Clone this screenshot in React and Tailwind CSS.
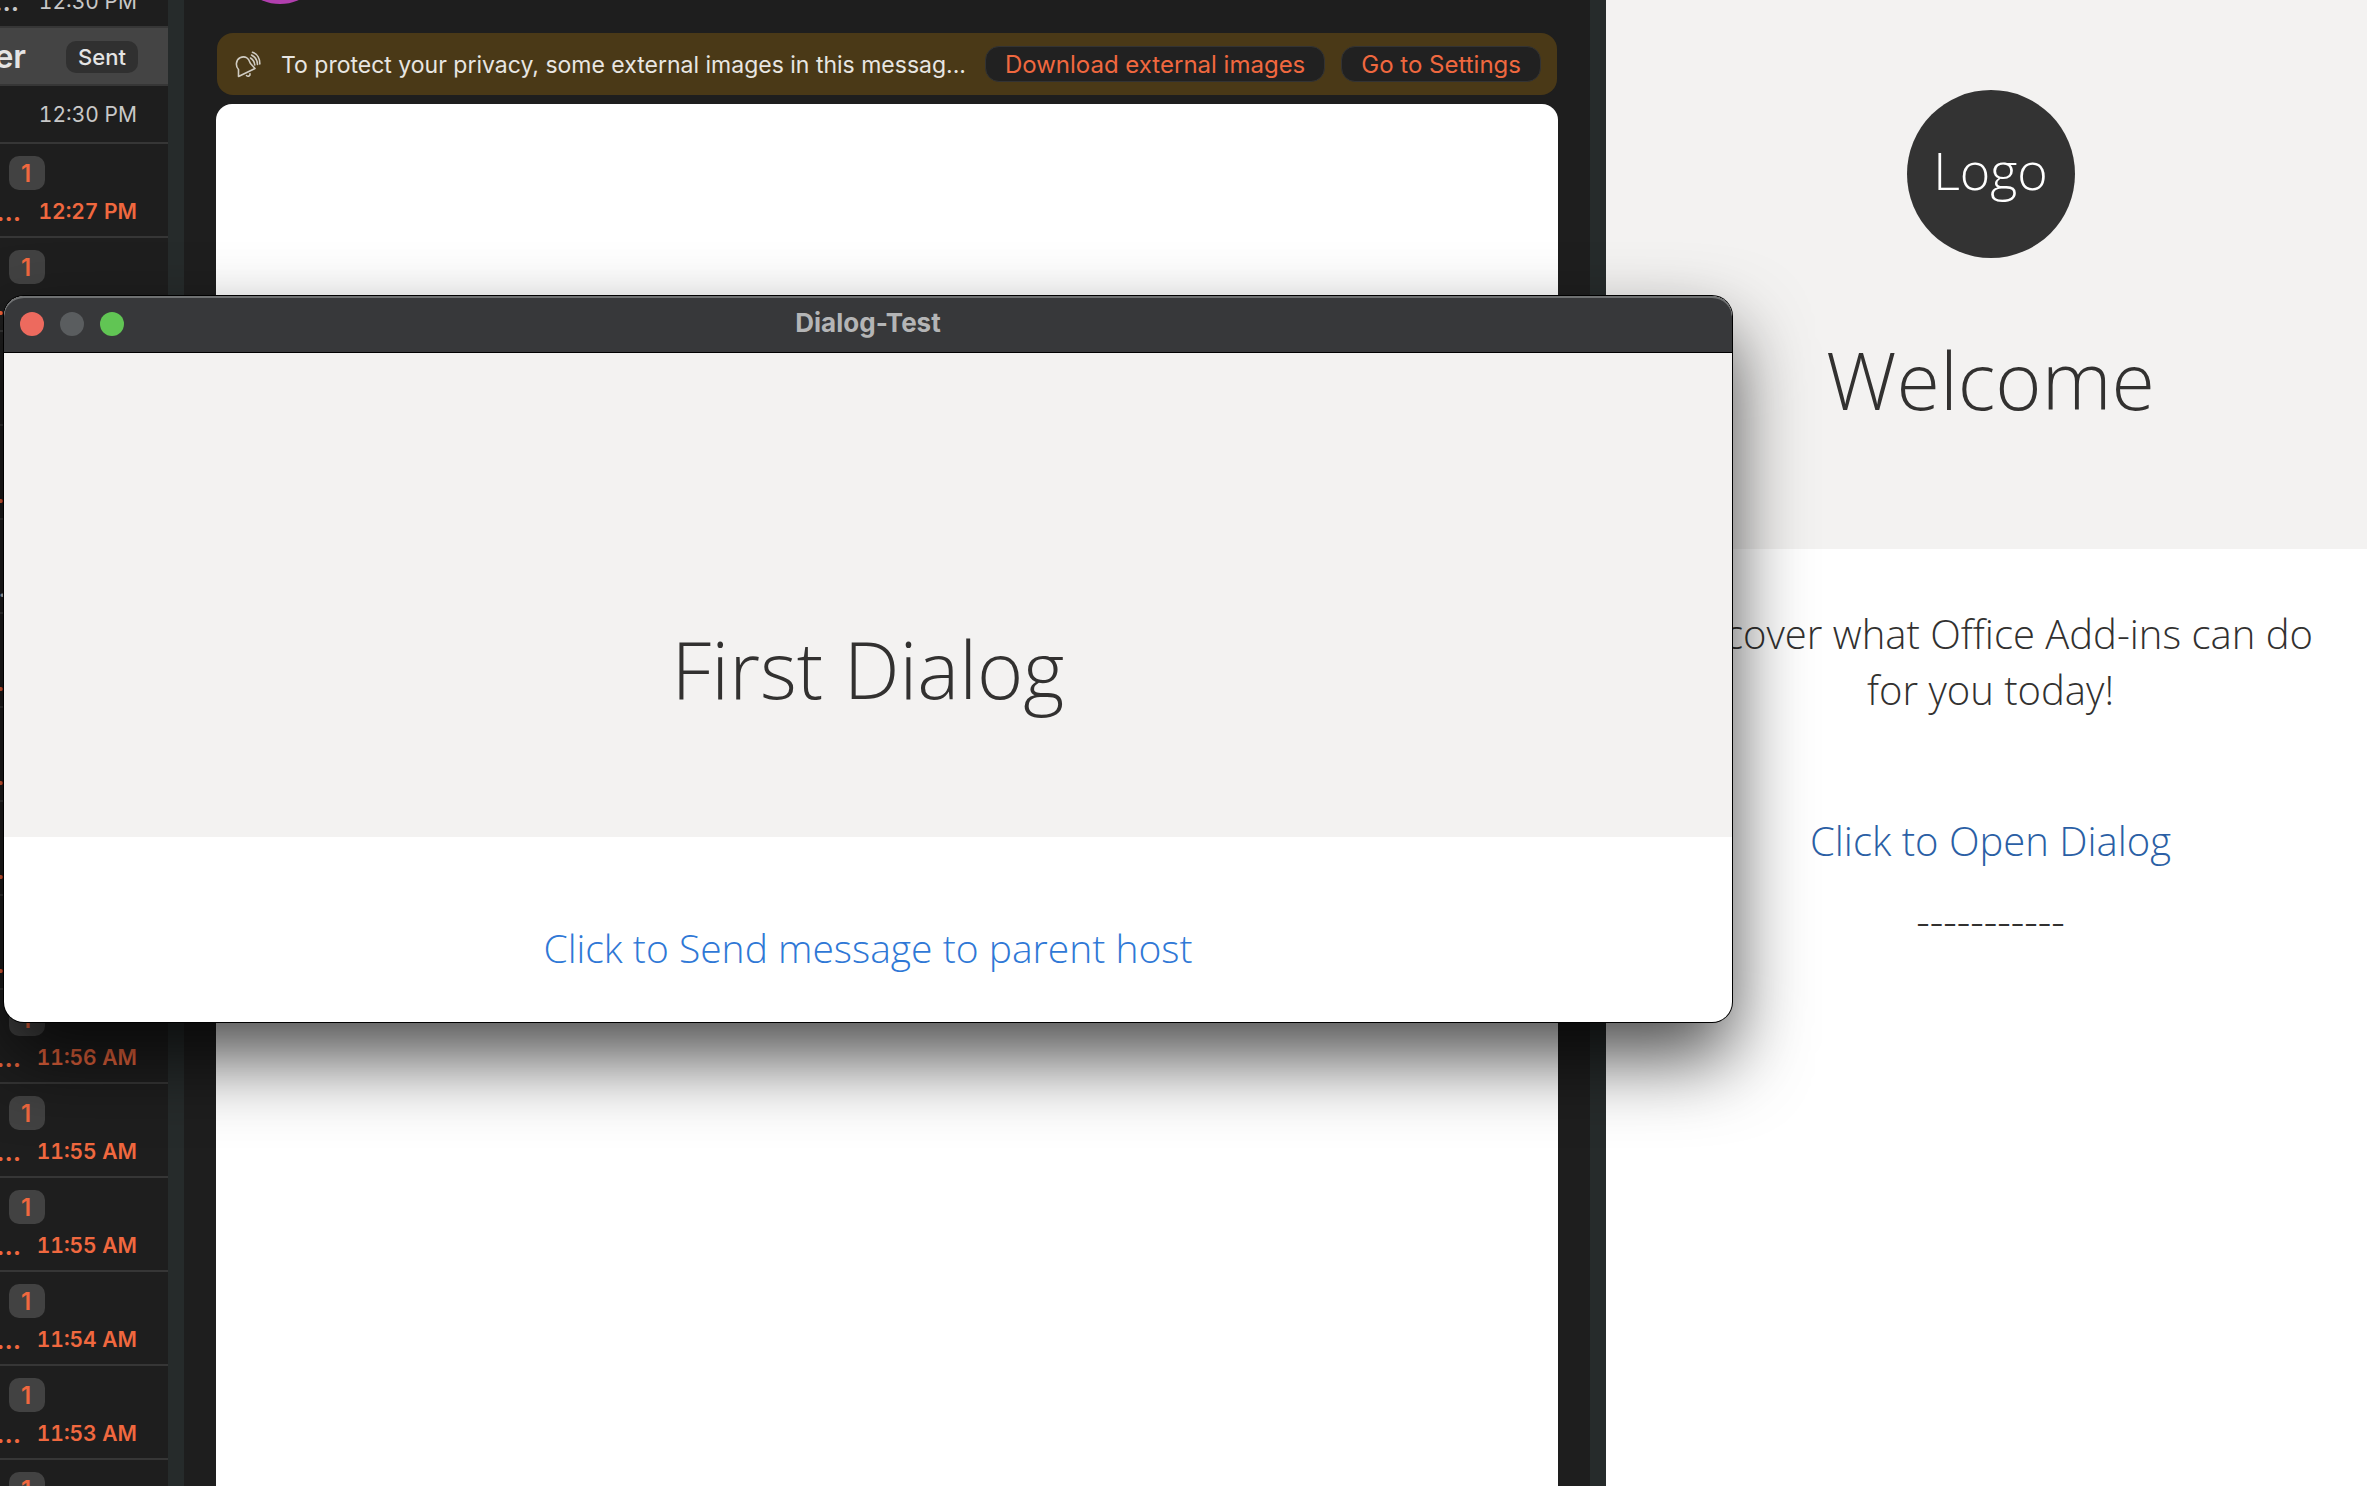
import React from "react";

const messages = [
  { time: "12:27 PM", unread: true },
  { time: "", unread: true },
  { time: "", unread: false, noPreview: true },
  { time: "", unread: true },
  { time: "", unread: false },
  { time: "", unread: true },
  { time: "", unread: true },
  { time: "", unread: true },
  { time: "", unread: true },
  { time: "11:56 AM", unread: true },
  { time: "11:55 AM", unread: true },
  { time: "11:55 AM", unread: true },
  { time: "11:54 AM", unread: true },
  { time: "11:53 AM", unread: true },
  { time: "", unread: true },
];

function BellIcon() {
  return (
    <svg viewBox="0 0 32 32" className="size-8 shrink-0" fill="none" stroke="#d0ccc2" strokeWidth="1.6" strokeLinecap="round" strokeLinejoin="round">
      <path d="M5.500 28.500 5.500 21.500C2.500 18.500 2.500 12 7 9.800C12 7.300 16 10 17.500 15.500L22 20.500Z" />
      <path d="M13.500 27.500C15 29 17.500 28 17 25.800" />
      <path d="M17.500 10C20 11.500 21.500 13.500 21.800 17" />
      <path d="M18.500 7C22.500 9 24.300 12.500 24.500 16.500" />
      <path d="M19.500 4.200C24.500 6 27 11 26.800 16" />
    </svg>
  );
}

function MessageRow({ time, unread, noPreview }) {
  return (
    <li className="h-[94px] shrink-0 border-b-2 border-[#363636] pt-3 pl-[9px] pr-[31px]">
      <div className="h-[34px]">
        {unread && (
          <span className="flex h-[34px] w-9 items-center justify-center rounded-[10px] bg-[#424242] pt-0.5 pr-0.5 text-2xl font-semibold text-[#f0683f]">
            1
          </span>
        )}
      </div>
      <div className={`mt-2 flex justify-end text-[21px] leading-7 whitespace-nowrap tabular-nums ${unread ? "font-semibold text-[#f0683f]" : "text-[#c8c8c8]"}`}>
        {!noPreview && <span className="text-[26px]">…</span>}
        <span className="ml-3.5 w-[102px] shrink-0 text-right">{time}</span>
      </div>
    </li>
  );
}

function MessageList() {
  return (
    <ul className="flex w-[168px] shrink-0 flex-col overflow-hidden bg-[#1e1e1e]">
      <li className="flex h-7 shrink-0 items-end justify-end border-b-2 border-[#363636] pr-[31px] pb-2.5 text-[21px] leading-7 whitespace-nowrap text-[#c8c8c8] tabular-nums">
        <span className="text-[26px] font-semibold">…</span>
        <span className="ml-4 w-[102px] shrink-0 text-right">12:30 PM</span>
      </li>
      <li className="flex h-[58px] shrink-0 items-center justify-end border-b-2 border-[#363636] bg-[#444444] pt-0.5 pr-[30px]">
        <span className="text-[32px] font-semibold text-[#e4e4e4]">er</span>
        <span className="ml-10 flex h-8 w-[72px] shrink-0 items-center justify-center rounded-[10px] bg-[#303030] text-[22px] font-medium text-[#e4e4e4]">
          Sent
        </span>
      </li>
      <li className="flex h-[58px] shrink-0 items-center justify-end border-b-2 border-[#363636] pt-0.5 pr-[31px] text-[21px] text-[#c8c8c8] tabular-nums">
        12:30 PM
      </li>
      {messages.map((m, i) => (
        <MessageRow key={i} {...m} />
      ))}
    </ul>
  );
}

function PrivacyBanner() {
  return (
    <div className="mx-px flex h-[62px] items-center rounded-2xl bg-[#4a3917] px-4 text-2xl">
      <BellIcon />
      <p className="ml-4 min-w-0 flex-1 pt-0.5 text-[23px] whitespace-nowrap text-[#e8e6e2]">
        To protect your privacy, some external images in this messag...
      </p>
      <button className="h-9 rounded-[14px] border border-[#333333] bg-[#212121] px-[19px] pt-px leading-8 whitespace-nowrap text-[#f0683f]">
        Download external images
      </button>
      <button className="ml-4 h-9 rounded-[14px] border border-[#333333] bg-[#212121] px-[19px] pt-px leading-8 whitespace-nowrap text-[#f0683f]">
        Go to Settings
      </button>
    </div>
  );
}

function MessagePane() {
  return (
    <main className="flex min-w-0 flex-1 flex-col bg-[#1e1e1e] px-8">
      {/* only the bottom edge of the sender's avatar is scrolled into view */}
      <div className="mb-[29px] ml-[18px] flex h-1 items-end overflow-hidden">
        <span className="size-[92px] shrink-0 rounded-full bg-[#b13fae]" />
      </div>
      <PrivacyBanner />
      <div className="mt-[9px] flex-1 rounded-t-2xl bg-white" />
    </main>
  );
}

function TaskPane() {
  return (
    <aside className="w-[761px] shrink-0 bg-white text-center font-['Open_Sans',sans-serif] font-light text-[#323130]">
      <header className="flex h-[549px] flex-col items-center bg-[#f3f2f1] pt-[90px] pl-2">
        <div className="flex size-[168px] items-center justify-center rounded-full bg-[#333333] pb-2 text-[52px] text-white">
          Logo
        </div>
        <h1 className="mt-[68px] text-[79px] leading-[108px]">Welcome</h1>
      </header>
      <div className="pl-2 text-[40px] leading-14">
        <p className="mx-auto w-[680px] pt-[57px]">
          Discover what Office Add-ins can do for you today!
        </p>
        <a href="#dialog" className="mt-[95px] block text-[#2b5fa5]">
          Click to Open Dialog
        </a>
        <p className="mt-6 text-[42px]">-----------</p>
      </div>
    </aside>
  );
}

function DialogWindow() {
  return (
    <section
      role="dialog"
      aria-labelledby="dialog-title"
      className="absolute top-[296px] left-1 flex h-[726px] w-[1728px] flex-col overflow-hidden rounded-[20px] bg-white font-['Open_Sans',sans-serif] font-light shadow-[0_0_0_1px_#000,0_36px_76px_rgba(0,0,0,0.7)]"
    >
      <div className="relative flex h-[57px] shrink-0 items-center justify-center rounded-t-[20px] border-b border-black bg-[#37383a] shadow-[inset_0_2px_0_#6f7172]">
        <div className="absolute left-4 flex gap-4">
          <button aria-label="Close" className="size-6 rounded-full bg-[#ed6a5e]" />
          <button aria-label="Minimize" className="size-6 rounded-full bg-[#5a5d5f]" />
          <button aria-label="Zoom" className="size-6 rounded-full bg-[#61c554]" />
        </div>
        <h2 id="dialog-title" className="pb-1 font-['Inter',sans-serif] text-[26px] font-bold text-[#b4b5b6]">
          Dialog-Test
        </h2>
      </div>
      <div className="flex h-[484px] shrink-0 flex-col items-center justify-end bg-[#f3f2f1] pb-[114px]">
        <h1 className="text-[79px] leading-[108px] text-[#323130]">First Dialog</h1>
      </div>
      <div className="flex flex-1 justify-center pt-[83px] text-[39px] leading-14">
        <a href="#send" className="text-[#2f78d6]">Click to Send message to parent host</a>
      </div>
    </section>
  );
}

export default function App() {
  return (
    <div className="relative flex h-screen overflow-hidden bg-[#1e1e1e] font-['Inter',sans-serif]">
      <MessageList />
      <div className="w-4 shrink-0 bg-[#262b2b]" />
      <MessagePane />
      <div className="w-4 shrink-0 bg-[#262b2b]" />
      <TaskPane />
      <DialogWindow />
    </div>
  );
}
